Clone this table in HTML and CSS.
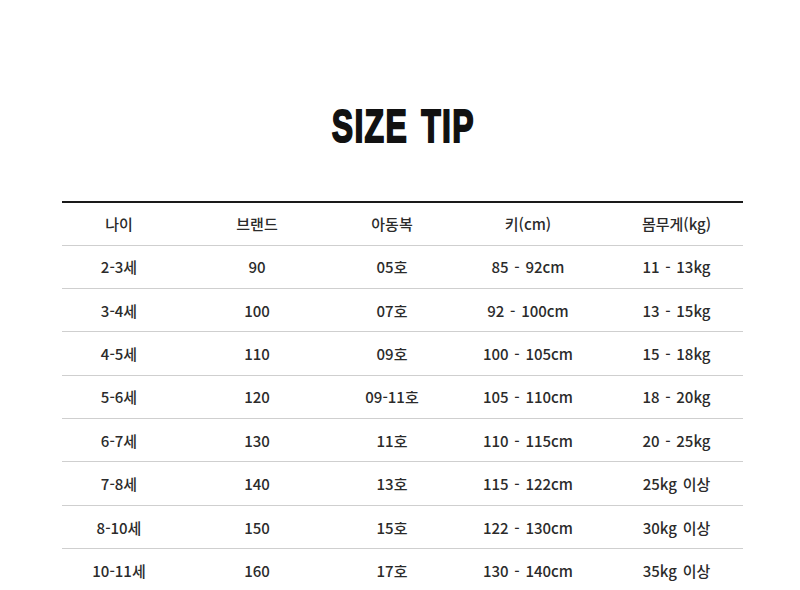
FILE: index.html
```html
<!DOCTYPE html>
<html lang="ko">
<head>
<meta charset="utf-8">
<link rel="stylesheet" href="styles.css">
</head>
<body>
<main class="page">
  <h1 class="title"><span class="title-text">SIZE TIP</span></h1>
  <div class="table">
    <div class="row head">
      <div class="cell">나이</div><div class="cell">브랜드</div><div class="cell">아동복</div><div class="cell">키(cm)</div><div class="cell">몸무게(kg)</div>
    </div>
    <div class="row"><div class="cell">2-3세</div><div class="cell">90</div><div class="cell">05호</div><div class="cell">85 - 92cm</div><div class="cell">11 - 13kg</div></div>
    <div class="row"><div class="cell">3-4세</div><div class="cell">100</div><div class="cell">07호</div><div class="cell">92 - 100cm</div><div class="cell">13 - 15kg</div></div>
    <div class="row"><div class="cell">4-5세</div><div class="cell">110</div><div class="cell">09호</div><div class="cell">100 - 105cm</div><div class="cell">15 - 18kg</div></div>
    <div class="row"><div class="cell">5-6세</div><div class="cell">120</div><div class="cell">09-11호</div><div class="cell">105 - 110cm</div><div class="cell">18 - 20kg</div></div>
    <div class="row"><div class="cell">6-7세</div><div class="cell">130</div><div class="cell">11호</div><div class="cell">110 - 115cm</div><div class="cell">20 - 25kg</div></div>
    <div class="row"><div class="cell">7-8세</div><div class="cell">140</div><div class="cell">13호</div><div class="cell">115 - 122cm</div><div class="cell">25kg 이상</div></div>
    <div class="row"><div class="cell">8-10세</div><div class="cell">150</div><div class="cell">15호</div><div class="cell">122 - 130cm</div><div class="cell">30kg 이상</div></div>
    <div class="row"><div class="cell">10-11세</div><div class="cell">160</div><div class="cell">17호</div><div class="cell">130 - 140cm</div><div class="cell">35kg 이상</div></div>
  </div>
</main>
</body>
</html>
```
FILE: styles.css
```css
html, body {
  margin: 0;
  padding: 0;
  background: #ffffff;
}
.page {
  width: 800px;
  height: 590px;
  overflow: hidden;
  padding-top: 96px;
  box-sizing: border-box;
}
.title {
  margin: 0;
  height: 58px;
  display: flex;
  justify-content: center;
  align-items: center;
  padding-left: 6px;
}
.title-text {
  display: inline-block;
  font-family: "Liberation Sans", Arial, sans-serif;
  font-weight: 700;
  font-size: 47px;
  line-height: 1;
  color: #111;
  letter-spacing: 2px;
  word-spacing: 4px;
  transform: scaleX(0.68);
  -webkit-text-stroke: 2px #111;
}
.table {
  margin: 47px 0 0 62px;
  width: 681px;
  border-top: 2px solid #1a1a1a;
}
.row {
  display: grid;
  grid-template-columns: 114px 162px 108px 164px 133px;
  height: 43.4px;
  border-bottom: 1.5px solid #cfcfcf;
  box-sizing: border-box;
  align-items: center;
}
.row.head {
  height: 42.5px;
}
.cell {
  text-align: center;
  font-family: "Noto Sans CJK KR", "Noto Sans", sans-serif;
  font-size: 15px;
  font-weight: 500;
  word-spacing: 1.5px;
  color: #2b2b2b;
}
```
